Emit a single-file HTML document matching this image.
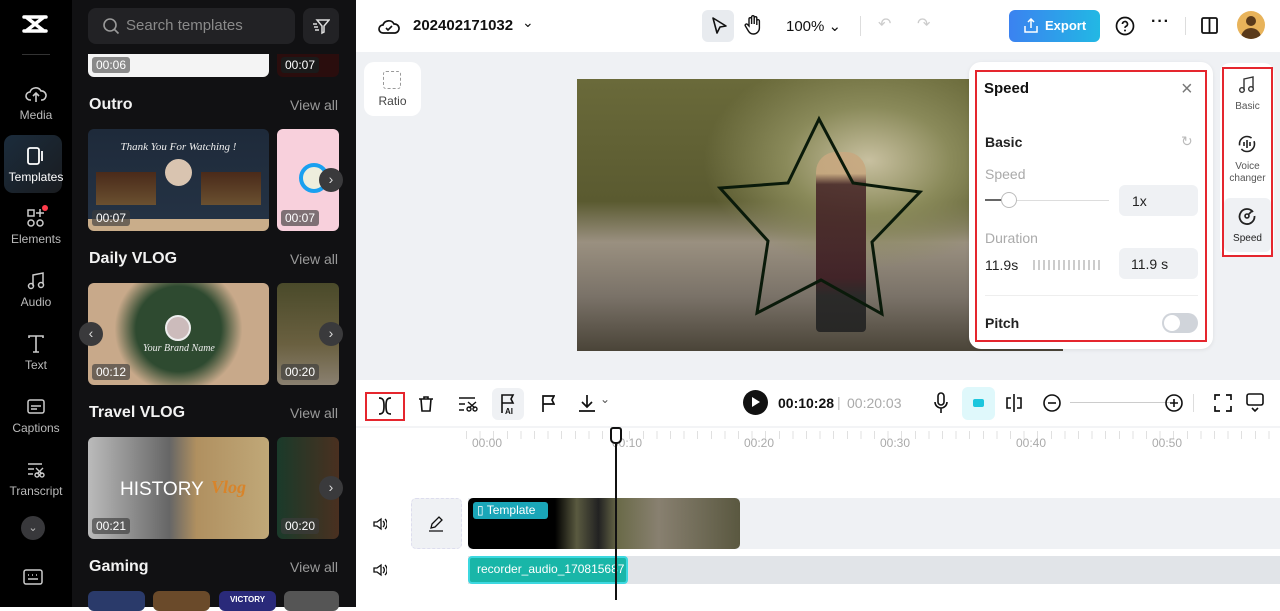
<!DOCTYPE html>
<html><head><meta charset="utf-8">
<style>
*{box-sizing:border-box;margin:0;padding:0}
body{width:1280px;height:607px;overflow:hidden;font-family:"Liberation Sans",sans-serif;background:#fff;position:relative}
.abs{position:absolute}
.nav{left:0;top:0;width:72px;height:607px;background:#000}
.navi{position:absolute;left:0;width:72px;text-align:center;color:#bbb;font-size:12px}
.navi svg{display:block;margin:0 auto 4px}
.panel{left:72px;top:0;width:284px;height:607px;background:#111113}
.sec{position:absolute;left:17px;font-size:16px;font-weight:bold;color:#f2f2f2}
.va{position:absolute;right:18px;font-size:14px;color:#9a9a9a}
.th{position:absolute;border-radius:6px;overflow:hidden}
.dur{position:absolute;left:4px;bottom:5px;background:rgba(60,60,60,.65);color:#fff;font-size:12px;padding:1px 4px;border-radius:3px}
.arr{position:absolute;width:24px;height:24px;border-radius:12px;background:#3a3a3c;color:#ddd;font-size:14px;text-align:center;line-height:23px}
.top{left:356px;top:0;width:924px;height:52px;background:#fff}
.canvas{left:356px;top:52px;width:924px;height:326px;background:#eff1f4}
.tl{left:356px;top:378px;width:924px;height:229px;background:#fff}
.ic{position:absolute}
</style></head><body>
<div class="abs nav">
 <svg class="abs" style="left:22px;top:14px" width="26" height="20" viewBox="0 0 26 20"><path d="M2 3h22M2 17h22M4 3l18 14M22 3L4 17" stroke="#fff" stroke-width="3.5" fill="none" stroke-linecap="round"/></svg>
 <div class="abs" style="left:22px;top:54px;width:28px;height:1px;background:#333"></div>
 <div class="navi" style="top:84px"><svg width="22" height="20" viewBox="0 0 22 20"><path d="M6 16H5a4 4 0 0 1 0-8 6 6 0 0 1 11-1 4.5 4.5 0 0 1 1 9h-1M11 18V9M8 12l3-3 3 3" stroke="#ccc" stroke-width="1.6" fill="none"/></svg>Media</div>
 <div class="abs" style="left:4px;top:135px;width:58px;height:58px;border-radius:9px;background:linear-gradient(135deg,#1b2c3c,#1a1c20)"></div>
 <div class="navi" style="top:146px;color:#fff"><svg width="20" height="20" viewBox="0 0 20 20"><rect x="2" y="2" width="11" height="16" rx="2" stroke="#fff" stroke-width="1.8" fill="none"/><path d="M16 5v10" stroke="#fff" stroke-width="1.8"/></svg>Templates</div>
 <div class="navi" style="top:208px"><svg width="20" height="20" viewBox="0 0 20 20"><rect x="2" y="2" width="6" height="6" stroke="#ccc" stroke-width="1.5" fill="none"/><path d="M14 1v8M10 5h8" stroke="#ccc" stroke-width="1.5"/><circle cx="5" cy="15" r="3" stroke="#ccc" stroke-width="1.5" fill="none"/><circle cx="14" cy="15" r="3" stroke="#ccc" stroke-width="1.5" fill="none"/></svg>Elements</div>
 <div class="abs" style="left:42px;top:205px;width:6px;height:6px;border-radius:3px;background:#ff3b4a"></div>
 <div class="navi" style="top:271px"><svg width="20" height="20" viewBox="0 0 20 20"><path d="M7 15V4l10-2v11" stroke="#ccc" stroke-width="1.5" fill="none"/><circle cx="5" cy="15" r="2.5" stroke="#ccc" stroke-width="1.5" fill="none"/><circle cx="15" cy="14" r="2.5" stroke="#ccc" stroke-width="1.5" fill="none"/></svg>Audio</div>
 <div class="navi" style="top:334px"><svg width="20" height="20" viewBox="0 0 20 20"><path d="M3 4V2h14v2M10 2v16M7 18h6" stroke="#ccc" stroke-width="1.6" fill="none"/></svg>Text</div>
 <div class="navi" style="top:397px"><svg width="20" height="20" viewBox="0 0 20 20"><rect x="2" y="3" width="16" height="13" rx="2" stroke="#ccc" stroke-width="1.5" fill="none"/><path d="M5 9h10M5 12h6" stroke="#ccc" stroke-width="1.5"/></svg>Captions</div>
 <div class="navi" style="top:460px"><svg width="20" height="20" viewBox="0 0 20 20"><path d="M2 4h14M2 9h6M2 14h5" stroke="#ccc" stroke-width="1.5"/><circle cx="11" cy="15" r="2" stroke="#ccc" stroke-width="1.4" fill="none"/><circle cx="16" cy="15" r="2" stroke="#ccc" stroke-width="1.4" fill="none"/><path d="M10 8l6 6M17 8l-6 6" stroke="#ccc" stroke-width="1.4"/></svg>Transcript</div>
 <div class="abs" style="left:21px;top:516px;width:24px;height:24px;border-radius:12px;background:#38383b;color:#bbb;text-align:center;font-size:11px;line-height:24px">⌄</div>
 <svg class="abs" style="left:23px;top:569px" width="20" height="16" viewBox="0 0 20 16"><rect x="1" y="1" width="18" height="14" rx="2" stroke="#ccc" stroke-width="1.5" fill="none"/><path d="M5 6h1M9 6h1M13 6h1M5 10h10" stroke="#ccc" stroke-width="1.5"/></svg>
</div>
<div class="abs panel">
 <div class="abs" style="left:16px;top:8px;width:207px;height:36px;border-radius:8px;background:#222225"></div>
 <svg class="abs" style="left:30px;top:17px" width="18" height="18" viewBox="0 0 18 18"><circle cx="8" cy="8" r="6" stroke="#999" stroke-width="1.6" fill="none"/><path d="M12.5 12.5l4 4" stroke="#999" stroke-width="1.6"/></svg>
 <div class="abs" style="left:54px;top:17px;font-size:15px;color:#8a8a8a">Search templates</div>
 <div class="abs" style="left:231px;top:8px;width:36px;height:36px;border-radius:8px;background:#222225"></div>
 <svg class="abs" style="left:240px;top:17px" width="18" height="18" viewBox="0 0 18 18"><path d="M5 3h12l-5 6v6l-2 1V9zM1 7h4M2 10h4M3 13h4" stroke="#ddd" stroke-width="1.5" fill="none"/></svg>
 <div class="th" style="left:16px;top:54px;width:181px;height:23px;background:#f4f4f4;border-radius:0 0 6px 6px"><div class="dur" style="bottom:4px;background:#8a8a8a">00:06</div></div>
 <div class="th" style="left:205px;top:54px;width:62px;height:23px;background:#2a0d0d;border-radius:0 0 6px 6px"><div class="dur" style="bottom:4px;background:#1a1a1a">00:07</div></div>
 <div class="sec" style="top:96px">Outro</div><div class="va" style="top:97px">View all</div>
 <div class="th" style="left:16px;top:129px;width:181px;height:102px;background:linear-gradient(#1e2a3a,#243244 88%,#c9ad8a 88%)">
  <div class="abs" style="left:0;top:12px;width:181px;text-align:center;color:#eee;font-family:'Liberation Serif',serif;font-style:italic;font-size:11px">Thank You For Watching !</div>
  <div class="abs" style="left:8px;top:43px;width:60px;height:33px;background:linear-gradient(#4a2a1a,#6a5030)"></div>
  <div class="abs" style="left:113px;top:43px;width:60px;height:33px;background:linear-gradient(#4a2a1a,#6a5030)"></div>
  <div class="abs" style="left:77px;top:30px;width:27px;height:27px;border-radius:14px;background:#d9c4b0"></div>
  <div class="dur">00:07</div></div>
 <div class="th" style="left:205px;top:129px;width:62px;height:102px;background:#f8d0dc"><div class="abs" style="left:22px;top:34px;width:30px;height:30px;border-radius:15px;border:4px solid #1aa0f0;background:#eed"></div><div class="dur">00:07</div></div>
 <div class="arr" style="left:247px;top:168px">›</div>
 <div class="sec" style="top:250px">Daily VLOG</div><div class="va" style="top:251px">View all</div>
 <div class="th" style="left:16px;top:283px;width:181px;height:102px;background:radial-gradient(circle at 50% 45%,#2e4a30 0,#2e4a30 40%,#c8a98a 60%)"><div class="abs" style="left:77px;top:32px;width:26px;height:26px;border-radius:13px;background:#cbb;border:2px solid #eee"></div><div class="abs" style="left:55px;top:60px;color:#eee;font-family:'Liberation Serif',serif;font-style:italic;font-size:10px">Your Brand Name</div><div class="dur">00:12</div></div>
 <div class="th" style="left:205px;top:283px;width:62px;height:102px;background:linear-gradient(#4a4a2a,#6a6040 60%,#8a8070)"><div class="dur">00:20</div></div>
 <div class="arr" style="left:7px;top:322px">‹</div><div class="arr" style="left:247px;top:322px">›</div>
 <div class="sec" style="top:404px">Travel VLOG</div><div class="va" style="top:405px">View all</div>
 <div class="th" style="left:16px;top:437px;width:181px;height:102px;background:linear-gradient(90deg,#bbb,#666 45%,#b09060 60%,#c0a878)"><div class="abs" style="left:32px;top:42px;color:#fff;font-size:19px">HISTORY</div><div class="abs" style="left:123px;top:40px;color:#d8842a;font-family:'Liberation Serif',serif;font-style:italic;font-size:18px;font-weight:bold">Vlog</div><div class="dur">00:21</div></div>
 <div class="th" style="left:205px;top:437px;width:62px;height:102px;background:linear-gradient(90deg,#1a3a2a,#4a3020)"><div class="dur">00:20</div></div>
 <div class="arr" style="left:247px;top:476px">›</div>
 <div class="sec" style="top:558px">Gaming</div><div class="va" style="top:559px">View all</div>
 <div class="th" style="left:16px;top:591px;width:57px;height:20px;background:#2a3a6a"></div>
 <div class="th" style="left:81px;top:591px;width:57px;height:20px;background:#6a4a2a"></div>
 <div class="th" style="left:147px;top:591px;width:57px;height:20px;background:#2a2a7a;color:#fff;font-size:8px;text-align:center;font-weight:bold;padding-top:4px">VICTORY</div>
 <div class="th" style="left:212px;top:591px;width:55px;height:20px;background:#555"></div>
</div>
<div class="abs" style="left:356px;top:278px;width:6px;height:52px;background:#2a2a2c;border-radius:0 6px 6px 0"></div>

<div class="abs top">
 <svg class="ic" style="left:22px;top:16px" width="22" height="20" viewBox="0 0 22 20"><path d="M6 17H5a4 4 0 0 1 0-8 6 6 0 0 1 11-1 4.5 4.5 0 0 1 1 9z" stroke="#111" stroke-width="1.7" fill="none"/><path d="M8 12l2 2 4-4" stroke="#111" stroke-width="1.6" fill="none"/></svg>
 <div class="abs" style="left:57px;top:17px;font-size:15px;font-weight:bold;color:#111">202402171032</div>
 <div class="abs" style="left:166px;top:14px;font-size:14px;color:#111">⌄</div>
 <div class="abs" style="left:346px;top:10px;width:32px;height:32px;border-radius:6px;background:#e8ebef"></div>
 <svg class="ic" style="left:354px;top:16px" width="18" height="20" viewBox="0 0 18 20"><path d="M3 2l13 8-6 1-3 6z" stroke="#111" stroke-width="1.6" fill="none" stroke-linejoin="round"/></svg>
 <svg class="ic" style="left:388px;top:14px" width="18" height="22" viewBox="0 0 18 22"><path d="M5 12V5a1.3 1.3 0 0 1 2.6 0v5V3a1.3 1.3 0 0 1 2.6 0v7V4a1.3 1.3 0 0 1 2.6 0v7V7a1.3 1.3 0 0 1 2.6 0v7a6 6 0 0 1-6 6 6 6 0 0 1-5-3l-3-5a1.3 1.3 0 0 1 2.2-1.4z" stroke="#111" stroke-width="1.4" fill="none"/></svg>
 <div class="abs" style="left:430px;top:17px;font-size:15px;color:#111">100% ⌄</div>
 <div class="abs" style="left:504px;top:16px;width:1px;height:20px;background:#ddd"></div>
 <div class="abs" style="left:522px;top:14px;font-size:16px;color:#ccc">↶</div>
 <div class="abs" style="left:561px;top:14px;font-size:16px;color:#ccc">↷</div>
 <div class="abs" style="left:653px;top:10px;width:91px;height:32px;border-radius:6px;background:linear-gradient(90deg,#3b82f0,#22b8e4)"></div>
 <svg class="ic" style="left:668px;top:18px" width="14" height="15" viewBox="0 0 14 15"><path d="M7 10V1M4 4l3-3 3 3M1 8v6h12V8" stroke="#fff" stroke-width="1.5" fill="none"/></svg>
 <div class="abs" style="left:689px;top:18px;font-size:13px;font-weight:bold;color:#fff">Export</div>
 <svg class="ic" style="left:759px;top:16px" width="20" height="20" viewBox="0 0 20 20"><circle cx="10" cy="10" r="8.5" stroke="#111" stroke-width="1.7" fill="none"/><path d="M7.5 8a2.5 2.5 0 1 1 3.5 2.3c-.7.4-1 .8-1 1.6" stroke="#111" stroke-width="1.7" fill="none"/><circle cx="10" cy="14.5" r="1" fill="#111"/></svg>
 <div class="abs" style="left:795px;top:13px;font-size:16px;font-weight:bold;color:#111;letter-spacing:1px">···</div>
 <div class="abs" style="left:829px;top:17px;width:1px;height:18px;background:#ddd"></div>
 <svg class="ic" style="left:845px;top:17px" width="17" height="17" viewBox="0 0 17 17"><rect x="1" y="1" width="15" height="15" rx="1.5" stroke="#111" stroke-width="1.8" fill="none"/><path d="M8.5 1v15" stroke="#111" stroke-width="1.8"/></svg>
 <div class="abs" style="left:881px;top:11px;width:28px;height:28px;border-radius:14px;background:#e8b35a;overflow:hidden"><div class="abs" style="left:9px;top:5px;width:10px;height:10px;border-radius:5px;background:#5a3a1a"></div><div class="abs" style="left:4px;top:17px;width:20px;height:14px;border-radius:10px 10px 0 0;background:#5a3a1a"></div></div>
</div>

<div class="abs canvas">
 <div class="abs" style="left:8px;top:10px;width:57px;height:54px;border-radius:10px;background:#fff"></div>
 <div class="abs" style="left:27px;top:19px;width:18px;height:18px;border:1.5px dashed #999;border-radius:3px"></div>
 <div class="abs" style="left:8px;top:42px;width:57px;text-align:center;font-size:12px;color:#444">Ratio</div>
 <div class="abs" style="left:221px;top:27px;width:486px;height:272px;background:radial-gradient(ellipse at 60% 30%,#c8c0a0 0,#8a8a5a 20%,transparent 40%),linear-gradient(#6a6a3a 0,#5a5a30 45%,#9a9080 60%,#7a7268 80%,#4a4438)"></div>
 <div class="abs" style="left:460px;top:100px;width:50px;height:180px;background:linear-gradient(#c8a880 0,#c8a880 12%,#4a2a2a 18%,#3a1a20 70%,#222 80%);border-radius:20px 20px 4px 4px;opacity:.9"></div>
 <svg class="abs" style="left:0;top:0" width="924" height="326"><polygon points="463,67 432,131 364,136 412,189 401,261 465,228 526,262 516,190 564,140 497,131" fill="none" stroke="#0a1a0a" stroke-width="3"/></svg>
 <div class="abs" style="left:613px;top:10px;width:244px;height:287px;border-radius:12px;background:#fff;box-shadow:0 1px 4px rgba(0,0,0,.08)"></div>
 <div class="abs" style="left:619px;top:18px;width:232px;height:272px;border:2px solid #e5262e"></div>
 <div class="abs" style="left:628px;top:28px;font-size:15px;font-weight:bold;color:#111">Speed</div>
 <div class="abs" style="left:825px;top:26px;font-size:20px;color:#777">×</div>
 <div class="abs" style="left:629px;top:82px;font-size:14px;font-weight:bold;color:#222">Basic</div>
 <div class="abs" style="left:825px;top:81px;font-size:14px;color:#bbb">↻</div>
 <div class="abs" style="left:629px;top:114px;font-size:14px;color:#aaa">Speed</div>
 <div class="abs" style="left:629px;top:148px;width:124px;height:1px;background:#ddd"></div>
 <div class="abs" style="left:629px;top:147px;width:20px;height:2px;background:#666"></div>
 <div class="abs" style="left:645px;top:140px;width:16px;height:16px;border-radius:8px;background:#fff;border:1px solid #bbb"></div>
 <div class="abs" style="left:763px;top:133px;width:79px;height:31px;border-radius:6px;background:#eff1f4;font-size:14px;color:#222;padding:8px 13px">1x</div>
 <div class="abs" style="left:629px;top:178px;font-size:14px;color:#aaa">Duration</div>
 <div class="abs" style="left:629px;top:205px;font-size:14px;color:#222">11.9s</div>
 <div class="abs" style="left:677px;top:208px;width:70px;height:10px;background:repeating-linear-gradient(90deg,#ccc 0 2px,transparent 2px 5px)"></div>
 <div class="abs" style="left:763px;top:196px;width:79px;height:31px;border-radius:6px;background:#eff1f4;font-size:14px;color:#222;padding:8px 12px">11.9 s</div>
 <div class="abs" style="left:629px;top:243px;width:213px;height:1px;background:#eee"></div>
 <div class="abs" style="left:629px;top:263px;font-size:14px;font-weight:bold;color:#222">Pitch</div>
 <div class="abs" style="left:806px;top:261px;width:36px;height:20px;border-radius:10px;background:#d0d4da"></div>
 <div class="abs" style="left:808px;top:263px;width:16px;height:16px;border-radius:8px;background:#fff"></div>
 <div class="abs" style="left:864px;top:11px;width:54px;height:194px;border-radius:10px;background:#fff"></div>
 <div class="abs" style="left:866px;top:15px;width:51px;height:190px;border:2px solid #e5262e"></div>
 <div class="abs" style="left:868px;top:146px;width:47px;height:54px;border-radius:6px;background:#eff1f4"></div>
 <svg class="abs" style="left:882px;top:24px" width="18" height="18" viewBox="0 0 18 18"><path d="M6 14V3l9-2v11" stroke="#333" stroke-width="1.4" fill="none"/><circle cx="4" cy="14" r="2.3" stroke="#333" stroke-width="1.4" fill="none"/><circle cx="13" cy="13" r="2.3" stroke="#333" stroke-width="1.4" fill="none"/></svg>
 <div class="abs" style="left:866px;top:49px;width:51px;text-align:center;font-size:10px;color:#555">Basic</div>
 <svg class="abs" style="left:882px;top:83px" width="18" height="18" viewBox="0 0 18 18"><circle cx="9" cy="9" r="7.5" stroke="#222" stroke-width="1.6" fill="none" stroke-dasharray="18 4"/><path d="M6 7v4M9 5v8M12 7v4" stroke="#222" stroke-width="1.6"/></svg>
 <div class="abs" style="left:866px;top:109px;width:51px;text-align:center;font-size:10px;color:#555;line-height:12px">Voice<br>changer</div>
 <svg class="abs" style="left:882px;top:155px" width="18" height="18" viewBox="0 0 18 18"><path d="M15 5A7.5 7.5 0 1 0 16.5 9" stroke="#222" stroke-width="1.8" fill="none"/><circle cx="9" cy="9" r="2" stroke="#222" stroke-width="1.6" fill="none"/><path d="M10.5 7.5l4-4" stroke="#222" stroke-width="1.6"/></svg>
 <div class="abs" style="left:866px;top:181px;width:51px;text-align:center;font-size:10px;color:#222">Speed</div>
</div>

<div class="abs tl">
 <div class="abs" style="left:0;top:0;width:924px;height:2px;background:#eff1f4"></div>
 <div class="abs" style="left:9px;top:14px;width:40px;height:29px;border:2px solid #e5262e"></div>
 <svg class="ic" style="left:21px;top:18px" width="16" height="20" viewBox="0 0 16 20"><path d="M2 2c4 0 5 2 5 8s-1 8-5 8M14 2c-4 0-5 2-5 8s1 8 5 8" stroke="#111" stroke-width="1.7" fill="none"/></svg>
 <svg class="ic" style="left:62px;top:17px" width="16" height="18" viewBox="0 0 16 18"><path d="M1 4h14M6 4V2h4v2M3 4l1 12h8l1-12" stroke="#111" stroke-width="1.6" fill="none"/></svg>
 <svg class="ic" style="left:102px;top:17px" width="20" height="18" viewBox="0 0 20 18"><path d="M1 3h16M1 9h6M1 15h5" stroke="#111" stroke-width="1.5"/><circle cx="11" cy="14" r="2" stroke="#111" stroke-width="1.4" fill="none"/><circle cx="17" cy="14" r="2" stroke="#111" stroke-width="1.4" fill="none"/><path d="M10 7l7 6M18 7l-7 6" stroke="#111" stroke-width="1.4"/></svg>
 <div class="abs" style="left:136px;top:10px;width:32px;height:32px;border-radius:6px;background:#eff1f4"></div>
 <svg class="ic" style="left:144px;top:15px" width="16" height="22" viewBox="0 0 16 22"><path d="M2 20V2h11l-2 4 2 4H2" stroke="#111" stroke-width="1.6" fill="none"/><text x="5" y="21" font-size="8" font-family="Liberation Sans" font-weight="bold" fill="#111">AI</text></svg>
 <svg class="ic" style="left:185px;top:16px" width="14" height="18" viewBox="0 0 14 18"><path d="M2 18V2h11l-2 4 2 4H2" stroke="#111" stroke-width="1.7" fill="none"/></svg>
 <svg class="ic" style="left:222px;top:15px" width="20" height="20" viewBox="0 0 20 20"><path d="M9 2v12M4 9l5 5 5-5M1 18h16" stroke="#111" stroke-width="1.7" fill="none"/></svg>
 <div class="abs" style="left:244px;top:14px;font-size:12px;color:#555">⌄</div>
 <div class="abs" style="left:387px;top:12px;width:25px;height:25px;border-radius:13px;background:#111"></div>
 <div class="abs" style="left:396px;top:19px;width:0;height:0;border-left:8px solid #fff;border-top:5.5px solid transparent;border-bottom:5.5px solid transparent"></div>
 <div class="abs" style="left:422px;top:17px;font-size:14px;font-weight:bold;color:#111">00:10:28</div>
 <div class="abs" style="left:481px;top:16px;font-size:14px;color:#bbb">|</div>
 <div class="abs" style="left:491px;top:17px;font-size:14px;color:#aaa">00:20:03</div>
 <svg class="ic" style="left:578px;top:14px" width="14" height="22" viewBox="0 0 14 22"><rect x="4" y="1" width="6" height="12" rx="3" stroke="#111" stroke-width="1.6" fill="none"/><path d="M1 10a6 6 0 0 0 12 0M7 16v5" stroke="#111" stroke-width="1.6" fill="none"/></svg>
 <div class="abs" style="left:606px;top:9px;width:33px;height:33px;border-radius:6px;background:#dff8fb"></div>
 <div class="abs" style="left:617px;top:21px;width:11px;height:8px;background:#1cc6dd;border-radius:2px"></div>
 <svg class="ic" style="left:649px;top:15px" width="18" height="20" viewBox="0 0 18 20"><path d="M9 1v18M6 5H2v10h4M12 5h4v10h-4" stroke="#111" stroke-width="1.6" fill="none"/></svg>
 <svg class="ic" style="left:686px;top:15px" width="20" height="20" viewBox="0 0 20 20"><circle cx="10" cy="10" r="8" stroke="#111" stroke-width="1.6" fill="none"/><path d="M6 10h8" stroke="#111" stroke-width="1.6"/></svg>
 <div class="abs" style="left:714px;top:24px;width:100px;height:1px;background:#ccc"></div>
 <svg class="ic" style="left:808px;top:15px" width="20" height="20" viewBox="0 0 20 20"><circle cx="10" cy="10" r="8" stroke="#111" stroke-width="1.6" fill="none"/><path d="M6 10h8M10 6v8" stroke="#111" stroke-width="1.6"/></svg>
 <div class="abs" style="left:837px;top:16px;width:1px;height:18px;background:#ddd"></div>
 <svg class="ic" style="left:858px;top:16px" width="18" height="18" viewBox="0 0 18 18"><path d="M1 6V1h5M12 1h5v5M17 12v5h-5M6 17H1v-5" stroke="#111" stroke-width="1.7" fill="none"/></svg>
 <svg class="ic" style="left:890px;top:15px" width="18" height="20" viewBox="0 0 18 20"><rect x="1" y="1" width="16" height="11" rx="2" stroke="#111" stroke-width="1.6" fill="none"/><path d="M6 15l3 3 3-3" stroke="#111" stroke-width="1.6" fill="none"/></svg>
 <div class="abs" style="left:0;top:48px;width:924px;height:2px;background:#f3f4f6"></div>
 <div class="abs" style="left:110px;top:52px;width:814px;height:18px;background:repeating-linear-gradient(90deg,#ccc 0 1px,transparent 1px 13.6px);opacity:.6;height:8px;top:53px"></div>
 <div class="abs" style="left:116px;top:58px;font-size:12px;color:#aaa">00:00</div>
 <div class="abs" style="left:256px;top:58px;font-size:12px;color:#aaa">00:10</div>
 <div class="abs" style="left:388px;top:58px;font-size:12px;color:#aaa">00:20</div>
 <div class="abs" style="left:524px;top:58px;font-size:12px;color:#aaa">00:30</div>
 <div class="abs" style="left:660px;top:58px;font-size:12px;color:#aaa">00:40</div>
 <div class="abs" style="left:796px;top:58px;font-size:12px;color:#aaa">00:50</div>
 <svg class="ic" style="left:17px;top:139px" width="14" height="14" viewBox="0 0 14 14"><path d="M1 5h3l4-3v10l-4-3H1zM10 4a4 4 0 0 1 0 6M12 2a7 7 0 0 1 0 10" stroke="#111" stroke-width="1.3" fill="none"/></svg>
 <svg class="ic" style="left:17px;top:185px" width="14" height="14" viewBox="0 0 14 14"><path d="M1 5h3l4-3v10l-4-3H1zM10 4a4 4 0 0 1 0 6M12 2a7 7 0 0 1 0 10" stroke="#111" stroke-width="1.3" fill="none"/></svg>
 <div class="abs" style="left:55px;top:120px;width:51px;height:51px;border-radius:5px;background:#eff1f4;border:1px dashed #dde"></div>
 <svg class="ic" style="left:72px;top:138px" width="16" height="16" viewBox="0 0 16 16"><path d="M3 12l1-4 7-7 3 3-7 7zM1 15h14" stroke="#111" stroke-width="1.3" fill="none"/></svg>
 <div class="abs" style="left:112px;top:120px;width:812px;height:51px;background:#eff1f4"></div>
 <div class="abs" style="left:112px;top:120px;width:272px;height:51px;border-radius:5px;background:linear-gradient(90deg,#000 0,#000 32%,#5a5a40 40%,#222 48%,#6a6a48 55%,#888070 70%,#5a5840 100%)"></div>
 <div class="abs" style="left:117px;top:124px;width:75px;height:17px;border-radius:3px;background:#1aa6b8;color:#fff;font-size:12px;padding:1px 4px">▯ Template</div>
 <div class="abs" style="left:112px;top:178px;width:812px;height:28px;background:#e1e4e8"></div>
 <div class="abs" style="left:112px;top:178px;width:160px;height:28px;border-radius:4px;background:#19b6a8;border:2px solid #3dd8e0"></div>
 <div class="abs" style="left:121px;top:184px;font-size:12px;color:#fff">recorder_audio_170815687</div>
 <div class="abs" style="left:259px;top:52px;width:2px;height:170px;background:#111"></div>
 <div class="abs" style="left:254px;top:49px;width:12px;height:17px;border:2px solid #111;border-radius:3px 3px 5px 5px;background:#fff"></div>
</div>
</body></html>
